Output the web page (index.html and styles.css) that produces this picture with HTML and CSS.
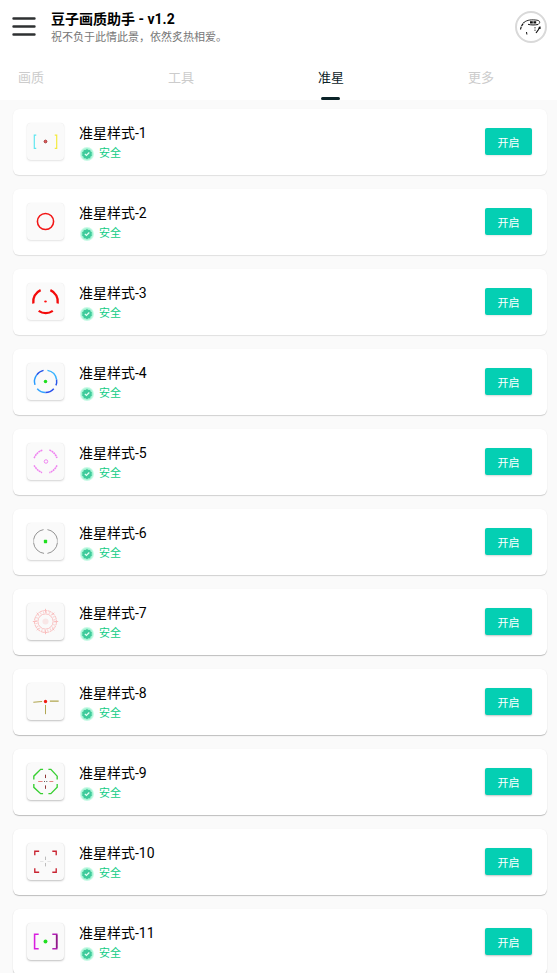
FILE: index.html
```html
<!DOCTYPE html>
<html lang="zh-CN">
<head>
<meta charset="utf-8">
<meta name="viewport" content="width=device-width, initial-scale=1">
<title>豆子画质助手</title>
<link rel="stylesheet" href="styles.css">
</head>
<body>
<svg class="defs" aria-hidden="true">
  <symbol id="safe" viewBox="0 0 14 14">
    <circle cx="7" cy="7" r="7" fill="#c9fae6"/>
    <circle cx="7" cy="7" r="6" fill="#a4f3d2"/>
    <path fill="#3fcb9b" d="M7 2l1.400 1 1.700-.1.5 1.600L12 5.500 11.500 7l.5 1.600-1.400 1-.5 1.600-1.700 0L7 12.200l-1.400-1-1.700 0-.5-1.600-1.400-1L2.500 7 2 5.500l1.400-1 .5-1.600L5.600 3z"/>
    <path fill="none" stroke="#e4fff4" stroke-width="1.200" d="M4.800 6.900l1.600 1.600 2.900-3"/>
  </symbol>
</svg>
<div class="app">
  <header class="top">
    <button class="menu" type="button" aria-label="菜单">
      <svg width="24" height="20" viewBox="0 0 24 20"><path d="M1.500 1.500h21M1.500 9.500h21M1.500 17.500h21" stroke="#2e3032" stroke-width="2.400" stroke-linecap="round"/></svg>
    </button>
    <div class="heading">
      <h1>豆子画质助手 - v1.2</h1>
      <p>祝不负于此情此景，依然炙热相爱。</p>
    </div>
    <button class="avatar" type="button" aria-label="头像">
      <svg width="28" height="28" viewBox="0 0 28 28" fill="none" stroke="#111">
        <path d="M3.500 16.500c.5-2.500 1.500-5 3.500-7" stroke-width="1.200" stroke-dasharray="3 .6"/>
        <path d="M7 9.500c3-2.800 8-3 13-2.300 3 .4 3.500 2.500 1.500 4" stroke-width=".9"/>
        <path d="M11 11.300c3 .9 7 .8 10 .2" stroke-width="1"/>
        <path d="M13 9.300h6.500" stroke-width="2.200" stroke-dasharray="2.800 .6"/>
        <path d="M22.500 14l-1 2.500-2.500 3.500M23 13.500v2.500" stroke-width="1.200"/>
        <path d="M18 14v5" stroke-width=".8" stroke-dasharray="1.500 1"/>
        <path d="M9.500 19l.4 2.500" stroke-width="1"/>
      </svg>
    </button>
  </header>
  <nav class="tabs">
    <a href="#quality">画质</a>
    <a href="#tools">工具</a>
    <a href="#crosshair" class="active" aria-current="page">准星</a>
    <a href="#more">更多</a>
  </nav>
  <main class="list">
    <article class="card">
      <div class="thumb"><svg viewBox="0 0 38 38" fill="none"><path d="M9.500 12.500H7.500v13.500H9.500" stroke="#5fe6f0" stroke-width="1.200"/><path d="M28.500 12.500h2v13.500h-2" stroke="#f4ea3c" stroke-width="1.200"/><circle cx="19" cy="19" r="1.400" fill="#e55" stroke="#933"/></svg></div>
      <div class="info"><h2>准星样式-1</h2><p><svg><use href="#safe"/></svg>安全</p></div>
      <button class="open" type="button">开启</button>
    </article>
    <article class="card">
      <div class="thumb"><svg viewBox="0 0 38 38"><circle cx="19" cy="19" r="8.300" fill="none" stroke="#f21616" stroke-width="1.600"/></svg></div>
      <div class="info"><h2>准星样式-2</h2><p><svg><use href="#safe"/></svg>安全</p></div>
      <button class="open" type="button">开启</button>
    </article>
    <article class="card">
      <div class="thumb"><svg viewBox="0 0 38 38" fill="none"><path d="M14 7.300A12.800 12.800 0 0 0 6.500 21M24 7.300A12.800 12.800 0 0 1 31.500 21M12 28.600a12.800 12.800 0 0 0 14.500 0" stroke="#f30b0b" stroke-width="2.400"/><ellipse cx="19" cy="19" rx="1.400" ry="1" fill="#f11"/></svg></div>
      <div class="info"><h2>准星样式-3</h2><p><svg><use href="#safe"/></svg>安全</p></div>
      <button class="open" type="button">开启</button>
    </article>
    <article class="card">
      <div class="thumb"><svg viewBox="0 0 38 38" fill="none" stroke-width="1.500"><path d="M17 7.600A11.500 11.500 0 0 0 10 12.200" stroke="#2856e8"/><path d="M10 12.200A11.500 11.500 0 0 0 8.200 22.500" stroke="#289bff"/><path d="M21 7.600a11.500 11.500 0 0 1 9.400 9.400" stroke="#37b2ff"/><path d="M30.400 17a11.500 11.500 0 0 1-.7 6" stroke="#2856e8"/><path d="M10.500 26.500A11.500 11.500 0 0 0 19 30.400" stroke="#35a5ff"/><path d="M19 30.400a11.500 11.500 0 0 0 8.500-3.900" stroke="#2850ed"/><circle cx="19" cy="19" r="1.800" fill="#20df20"/></svg></div>
      <div class="info"><h2>准星样式-4</h2><p><svg><use href="#safe"/></svg>安全</p></div>
      <button class="open" type="button">开启</button>
    </article>
    <article class="card">
      <div class="thumb"><svg viewBox="0 0 38 38" fill="none" stroke="#ef83f0"><path d="M7.300 15.500C9 11.500 12 8.500 16 7.300M23 7.300c3.500 1.200 6.500 4.200 7.800 8.200M7.300 23c1.200 2.500 4.500 6 8.200 7.500M30.800 23c-1.300 3-4.300 6.200-7.800 7.500" stroke-width="1.600" stroke-dasharray="2 .5"/><circle cx="19.500" cy="19" r="1.800"/></svg></div>
      <div class="info"><h2>准星样式-5</h2><p><svg><use href="#safe"/></svg>安全</p></div>
      <button class="open" type="button">开启</button>
    </article>
    <article class="card">
      <div class="thumb"><svg viewBox="0 0 38 38" fill="none"><path d="M17 6.800A12.200 12.200 0 0 0 6.800 17M6.800 20.500A12.200 12.200 0 0 0 17.500 31.200M21 31.200A12.200 12.200 0 0 0 31.200 20.500M31.200 17A12.200 12.200 0 0 0 21 6.800" stroke="#777" stroke-width=".8"/><path d="M6.800 17v3.500M31.200 17v3.500" stroke="#aaa" stroke-width=".7"/><rect x="17.300" y="17.300" width="3.400" height="3.400" rx=".6" fill="#20df20"/></svg></div>
      <div class="info"><h2>准星样式-6</h2><p><svg><use href="#safe"/></svg>安全</p></div>
      <button class="open" type="button">开启</button>
    </article>
    <article class="card">
      <div class="thumb"><svg viewBox="0 0 38 38" fill="none" stroke="#f9bcbc"><circle cx="19" cy="19" r="11.300" stroke-width="1" stroke-dasharray="4 .6"/><circle cx="19" cy="19" r="7.800" stroke-width=".9"/><circle cx="19" cy="19" r="9.500" stroke-width="2" stroke-dasharray="1 2" opacity=".65"/><path d="M19 6v4M19 28v4M6 19h4M28 19h4M10 10l2 2M28 10l-2 2M10 28l2-2M28 28l-2-2"/><circle cx="19" cy="19" r="1.600" stroke-width="3" opacity=".3"/></svg></div>
      <div class="info"><h2>准星样式-7</h2><p><svg><use href="#safe"/></svg>安全</p></div>
      <button class="open" type="button">开启</button>
    </article>
    <article class="card">
      <div class="thumb"><svg viewBox="0 0 38 38" fill="none"><path d="M6.500 19.700l9-.7M23.500 18.600h9" stroke="#b0a54e" stroke-width="1.100"/><path d="M19 22.500V32" stroke="#b0a54e" stroke-width="1"/><circle cx="19" cy="19" r="1.700" fill="#f11c13"/></svg></div>
      <div class="info"><h2>准星样式-8</h2><p><svg><use href="#safe"/></svg>安全</p></div>
      <button class="open" type="button">开启</button>
    </article>
    <article class="card">
      <div class="thumb"><svg viewBox="0 0 38 38" fill="none"><path d="M16.500 6.500H14L7 13.500V17M22 6.500h2.500L31 13.500V17M7 21.500V25l7 6.500h2.500M31 21.500V25l-6.500 6.500H22" stroke="#38cf32" stroke-width="1.400"/><path d="M19 12v3.500M19 23v3.500" stroke="#8c3030"/><path d="M11.500 19h4.500M23 19h4" stroke="#e27c7c"/><path d="M17.500 19h1M19.800 19h1" stroke="#555"/></svg></div>
      <div class="info"><h2>准星样式-9</h2><p><svg><use href="#safe"/></svg>安全</p></div>
      <button class="open" type="button">开启</button>
    </article>
    <article class="card">
      <div class="thumb"><svg viewBox="0 0 38 38" fill="none"><path d="M8 12.500V8.500h4.500M26 8.500h4v4M8 26v4h4.500M26 30h4v-4" stroke="#c92432" stroke-width="1.400"/><path d="M19 14v3.500M19 20.500V24" stroke="#aaa" stroke-width=".8"/><path d="M13.500 19h3.500M21 19h3.500" stroke="#ddd" stroke-width=".8"/></svg></div>
      <div class="info"><h2>准星样式-10</h2><p><svg><use href="#safe"/></svg>安全</p></div>
      <button class="open" type="button">开启</button>
    </article>
    <article class="card">
      <div class="thumb"><svg viewBox="0 0 38 38" fill="none" stroke-width="1.600"><path d="M12 11.500H7.800v15H12" stroke="#d91fe0"/><path d="M26 11.500h4.500v15H26" stroke="#b321b8"/><path d="M30.500 12v14" stroke="#8e1d85"/><circle cx="19" cy="19" r="2" fill="#20df20"/></svg></div>
      <div class="info"><h2>准星样式-11</h2><p><svg><use href="#safe"/></svg>安全</p></div>
      <button class="open" type="button">开启</button>
    </article>
  </main>
</div>
</body>
</html>
```
FILE: styles.css
```css
* {
  box-sizing: border-box;
  margin: 0;
  padding: 0;
}

body {
  background: #fafafa;
  color: #111;
  font-family: Roboto, "Noto Sans CJK SC", sans-serif;
}

button {
  border: 0;
  background: none;
  font: inherit;
  cursor: pointer;
}

svg {
  display: block;
}

.defs {
  position: absolute;
  width: 0;
  height: 0;
}

.app {
  display: flex;
  flex-direction: column;
  height: 100vh;
}

.top {
  display: flex;
  align-items: center;
  gap: 15px;
  height: 54px;
  padding: 0 10px 0 12px;
  background: #fff;
  flex: none;
}

.heading {
  flex: 1;
  padding-top: 4px;
}

.heading h1 {
  font-size: 14px;
  line-height: 18px;
  font-weight: 700;
  color: #000;
}

.heading p {
  font-size: 11px;
  line-height: 20px;
  color: #777;
}

.avatar {
  display: grid;
  place-items: center;
  width: 32px;
  height: 32px;
  border: 2px solid #d9d9d9;
  border-radius: 50%;
  background: #fff;
}

.tabs {
  display: flex;
  justify-content: space-between;
  height: 46px;
  padding: 0 63px 0 18px;
  background: #fff;
  flex: none;
}

.tabs a {
  display: flex;
  flex-direction: column;
  align-items: center;
  justify-content: space-between;
  padding-top: 14px;
  font-size: 13px;
  line-height: 20px;
  color: #ccc;
  text-decoration: none;
}

.tabs .active {
  color: #0b2328;
}

.tabs .active::after {
  content: "";
  width: 19px;
  height: 3px;
  border-radius: 2px;
  background: #0b2328;
}

.list {
  display: flex;
  flex-direction: column;
  gap: 14px;
  flex: 1;
  min-height: 0;
  padding: 9px 10px 9px 13px;
  overflow-y: auto;
  scrollbar-width: none;
}

.card {
  --shade: 0.1;
  display: flex;
  align-items: center;
  gap: 15px;
  height: 66px;
  padding: 0 15px 1px 14px;
  border-radius: 6px;
  background: #fff;
  box-shadow: 0 1px 1px rgb(0 0 0 / var(--shade)), 0 0 1px rgb(0 0 0 / 0.06);
  flex: none;
}

.card:nth-child(n + 4) {
  --shade: 0.17;
}

.card:nth-child(n + 7) {
  --shade: 0.24;
}

.thumb {
  width: 37px;
  height: 37px;
  border-radius: 4px;
  background: #fafafa;
  box-shadow: 0 1px 2px rgb(0 0 0 / var(--shade)), 0 0 1px rgb(0 0 0 / 0.1);
}

.info {
  flex: 1;
  padding-top: 5px;
}

.info h2 {
  font-size: 14px;
  line-height: 20px;
  font-weight: 400;
  color: #000;
}

.info p {
  display: flex;
  align-items: center;
  gap: 5px;
  padding-left: 1px;
  font-size: 11px;
  line-height: 22px;
  color: #12cc86;
}

.info svg {
  width: 14px;
  height: 14px;
}

.open {
  width: 47px;
  height: 27px;
  border-radius: 2px;
  background: #04cfb3;
  box-shadow: 0 1px 2px rgb(0 0 0 / var(--shade));
  color: #fff;
  font-size: 11px;
}
```
